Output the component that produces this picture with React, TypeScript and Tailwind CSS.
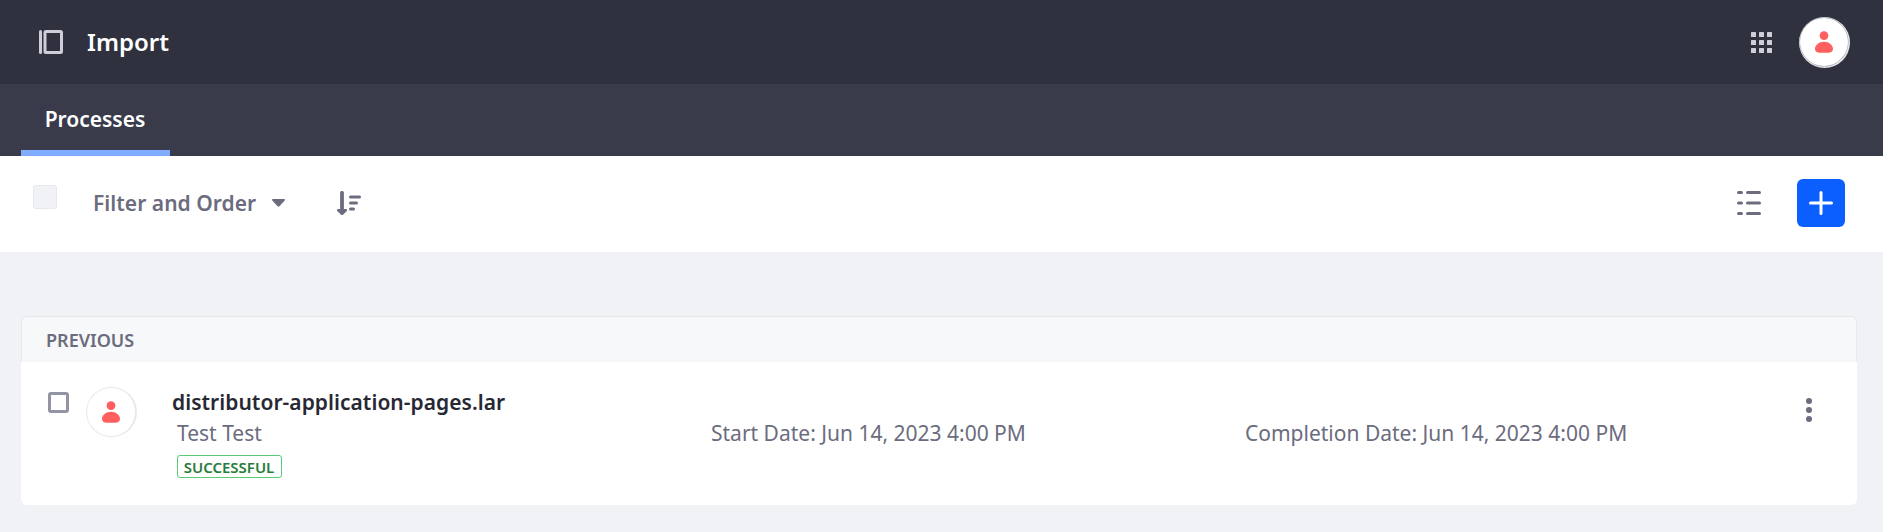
import React from "react";

function UserGlyph() {
  return (
    <svg viewBox="0 0 18 22" className="h-[22px] w-[18px] fill-[#ff5f5f]">
      <circle cx="9" cy="4.6" r="4.4" />
      <path d="M9 10.700c5 0 9 3.400 9 7 0 2.800-1.800 4.100-5 4.100H5c-3.200 0-5-1.300-5-4.100 0-3.600 4-7 9-7z" />
    </svg>
  );
}

function PanelIcon() {
  return (
    <svg viewBox="0 0 24 24" className="h-6 w-6 text-[#cdced9]" fill="none" stroke="currentColor">
      <rect x="6" y="1.500" width="16.500" height="21" rx="1" strokeWidth="3" />
      <rect x="0" y="0" width="3" height="24" rx="1.500" fill="currentColor" stroke="none" />
    </svg>
  );
}

function AppsIcon() {
  const cells = [0, 8, 16];
  return (
    <svg viewBox="0 0 21 21" className="h-[21px] w-[21px] fill-[#cdced9]">
      {cells.map((y) => cells.map((x) => <rect key={`${x}-${y}`} x={x} y={y} width="5" height="5" rx="0.6" />))}
    </svg>
  );
}

function SortIcon() {
  return (
    <svg viewBox="0 0 24 24" className="h-6 w-6 fill-[#6b6c7e]">
      <path d="M5 0c1 0 1.900.7 1.900 1.700v16.400h1.700c1.500 0 2 1.200 1 2.100l-3.300 3.200c-.7.700-1.800.700-2.500 0L.5 20.200c-1-.9-.5-2.100 1-2.100h1.600V1.700C3.100.7 4 0 5 0z" />
      <rect x="12" y="4.500" width="12" height="3" rx="1.500" />
      <rect x="12" y="10.500" width="9" height="3" rx="1.500" />
      <rect x="12" y="16.500" width="6" height="3" rx="1.500" />
    </svg>
  );
}

function ListIcon() {
  const rows = [0, 10.5, 21];
  return (
    <svg viewBox="0 0 24 24" className="h-6 w-6 fill-[#6b6c7e]">
      {rows.map((y) => (
        <g key={y}>
          <rect x="0" y={y} width="6" height="3" rx="1.5" />
          <rect x="9" y={y} width="15" height="3" rx="1.5" />
        </g>
      ))}
    </svg>
  );
}

export default function App() {
  return (
    <div className="min-h-[532px] w-full bg-[#f1f2f5] font-['Noto_Sans',sans-serif] text-[21px] leading-[31px] text-[#6b6c7e]">
      <header className="flex h-[84px] items-center bg-[#30313f] pr-[33px] pl-[39px]">
        <PanelIcon />
        <h1 className="ml-6 pb-0.5 text-[24px] font-semibold text-white">Import</h1>
        <div className="ml-auto flex items-center gap-[27px]">
          <AppsIcon />
          <div className="mt-px h-[51px] w-[51px] rounded-full bg-[#e7e7ed] p-px">
            <div className="flex h-12 w-12 items-center justify-center rounded-full bg-white pr-px ring-[0.500px] ring-[#9a9ba6]">
              <UserGlyph />
            </div>
          </div>
        </div>
      </header>

      <nav className="flex h-[72px] bg-[#393a4a] px-[21px]">
        <a className="flex h-full w-[149px] items-center justify-center border-b-[6px] border-[#80acff] pt-1 pr-px font-semibold text-white">
          Processes
        </a>
      </nav>

      <div className="flex h-24 items-center bg-white pr-[38px] pb-0.5 pl-[33px]">
        <span className="mb-3 h-6 w-6 rounded-[3px] border border-[#e7e7ed] bg-[#f1f2f5]" />
        <button className="ml-9 flex items-center font-semibold">
          <span className="tracking-[0.035px]">Filter and Order</span>
          <svg viewBox="0 0 14 8" className="ml-4 h-2 w-[13px] fill-[#6b6c7e]" preserveAspectRatio="none">
            <path d="M1 0h12c.9 0 1.300.8.700 1.400L8 7.300c-.6.600-1.400.600-2 0L.3 1.400C-.3.800.1 0 1 0z" />
          </svg>
        </button>
        <span className="ml-[52px]">
          <SortIcon />
        </span>
        <div className="ml-auto flex items-center gap-9">
          <ListIcon />
          <button className="flex h-12 w-12 items-center justify-center rounded-[6px] bg-[#0b5fff]">
            <svg viewBox="0 0 24 24" className="h-6 w-6 fill-white">
              <rect x="10.5" y="0" width="3" height="24" rx="1.5" />
              <rect x="0" y="10.500" width="24" height="3" rx="1.500" />
            </svg>
          </button>
        </div>
      </div>

      <main className="px-[21px] pt-16">
        <section className="w-[1836px]">
          <div className="flex h-[46px] items-center rounded-t-[6px] border border-b-0 border-[#e7e7ed] bg-[#f7f8f9] pt-0.5 pl-6 text-[18px] font-semibold">
            PREVIOUS
          </div>
          <div className="flex h-[143px] rounded-b-[6px] bg-white pl-[27px]">
            <span className="mt-[30px] h-[21px] w-[21px] rounded-[3px] border-[3px] border-[#9394a3]" />
            <div className="mt-[25px] ml-[17px] flex h-[50px] w-[51px] items-center justify-center rounded-full border border-r-2 border-[#e7e7ed] pr-px">
              <UserGlyph />
            </div>
            <div className="ml-[35px] flex-1 pt-[25px]">
              <h2 className="font-semibold tracking-[0.035px] text-[#272833]">distributor-application-pages.lar</h2>
              <div className="flex pl-[5px]">
                <span className="w-[534px]">Test Test</span>
                <span className="w-[534px]">Start Date: Jun 14, 2023 4:00 PM</span>
                <span>Completion Date: Jun 14, 2023 4:00 PM</span>
              </div>
              <span className="mt-[6px] ml-[5px] flex h-[23px] w-[105px] items-center justify-center rounded-[3px] border border-[#5aca75] pt-0.5 pr-px text-[15px] font-semibold text-[#287d3c]">
                SUCCESSFUL
              </span>
            </div>
            <svg viewBox="0 0 6 24" className="mt-9 mr-[45px] h-6 w-1.5 fill-[#6b6c7e]">
              <circle cx="3" cy="3" r="3" />
              <circle cx="3" cy="12" r="3" />
              <circle cx="3" cy="21" r="3" />
            </svg>
          </div>
        </section>
      </main>
    </div>
  );
}
